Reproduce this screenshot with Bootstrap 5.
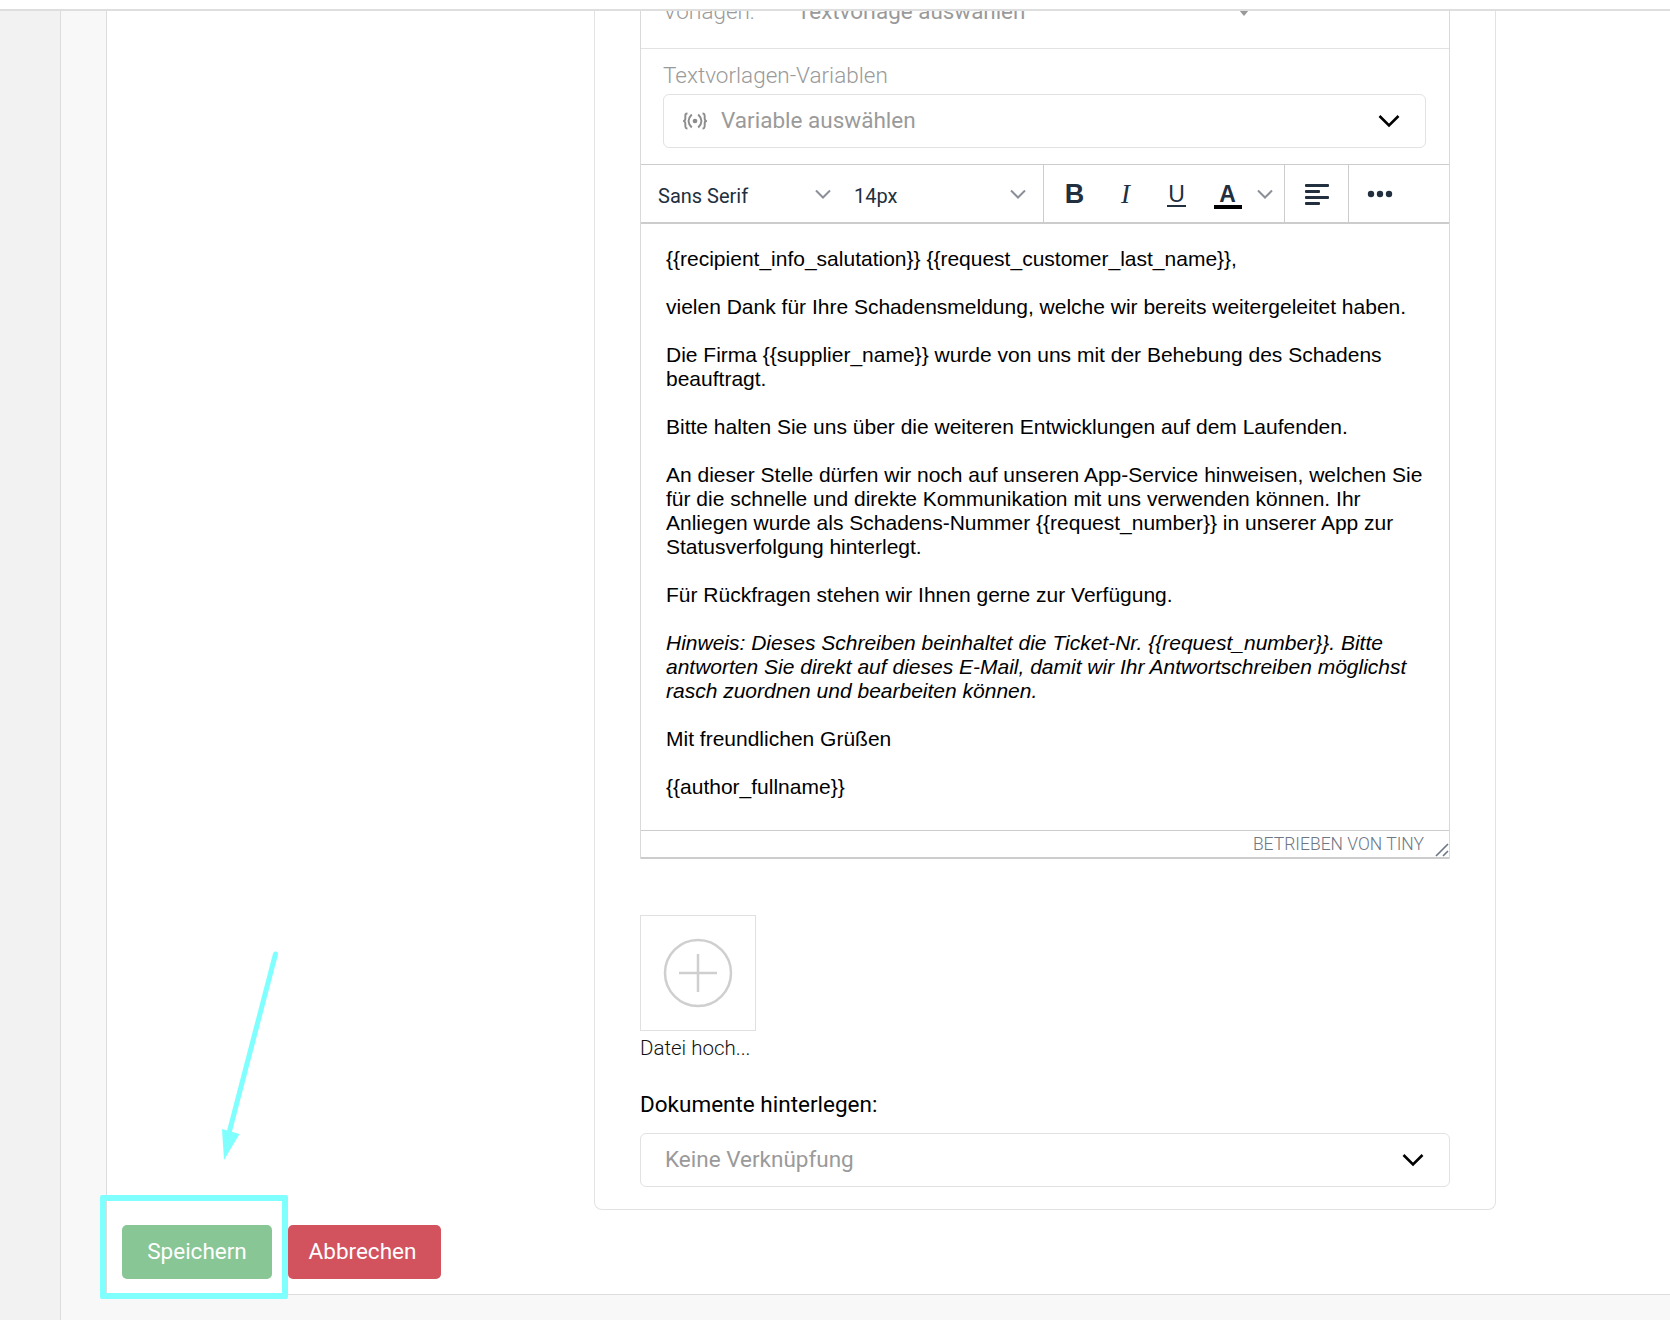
<!DOCTYPE html>
<html lang="de">
<head>
<meta charset="UTF-8">
<meta name="viewport" content="width=device-width, initial-scale=1.0">
<title>Textvorlage</title>
<link href="https://cdn.jsdelivr.net/npm/bootstrap@5.3.3/dist/css/bootstrap.min.css" rel="stylesheet">
<style>
body { height: 1320px; overflow: hidden; background: #fff; font-family: Roboto, sans-serif; font-weight: 300; position: relative; }
.top-strip { height: 11px; border-bottom: 2px solid #dedede; }
.shell { height: 1309px; }
.rail { width: 61px; background: #f2f2f2; border-right: 1px solid #ddd; }
.stage { background: #f8f8f8; padding-left: 45px; }
.sheet { height: 1284px; background: #fff; border-left: 1px solid #ddd; border-bottom: 1px solid #ddd; }
.tpl-card { width: 902px; height: 1199px; margin-left: 487px; padding: 0 45px 0 45px; border: 1px solid #e2e2e2; border-top: 0; border-radius: 0 0 8px 8px; }
.tpl-box { border-left: 1px solid #dadada; border-right: 1px solid #dadada; }
.cut-row { height: 38px; overflow: hidden; border-bottom: 1px solid #e2e2e2; color: #9a9a9a; font-size: 22.4px; line-height: 24px; padding-left: 22px; }
.cut-row span { margin-top: -12px; }
.cut-name { width: 134px; }
.cut-value { width: 441px; font-weight: 400; }
.var-block { height: 115px; padding: 13px 23px 0 22px; }
.var-label { font-size: 22.5px; line-height: 26px; color: #9a9a9a; margin-bottom: 6px; }
.pick { height: 54px; border: 1px solid #e2e2e2; border-radius: 6px; font-size: 22.5px; font-weight: 400; color: #9a9a9a; background: #fff; }
.pick-var { padding: 0 25px 0 17px; }
.pick-doc { padding: 0 25px 0 24px; margin-top: 15px; }
.toolbar { height: 60px; border-top: 1px solid #ccc; border-bottom: 2px solid #ccc; color: #222f3e; }
.tool-fonts { width: 403px; padding-left: 17px; font-size: 20px; font-weight: 400; border-right: 1px solid #ccc; }
.font-cell { width: 196px; padding-right: 23px; }
.size-cell { width: 189px; padding-right: 17px; }
.font-text { padding-top: 5px; }
.tool-format { width: 241px; border-right: 1px solid #ccc; padding-left: 5px; }
.tool-align { width: 64px; border-right: 1px solid #ccc; }
.tool-more { padding-left: 18px; }
.t-glyph { width: 51px; text-align: center; font-size: 27px; line-height: 32px; }
.t-bold { font-family: "Liberation Sans", sans-serif; font-weight: 700; }
.t-italic { font-family: "Liberation Serif", serif; font-style: italic; font-weight: 400; }
.t-under { font-family: "Liberation Sans", sans-serif; font-size: 23px; font-weight: 400; }
.t-under span { display: inline-block; line-height: 21px; border-bottom: 2px solid #222f3e; padding: 0 1px; }
.t-color { font-family: "Liberation Sans", sans-serif; font-size: 23px; font-weight: 700; }
.t-color span { display: inline-block; width: 28px; line-height: 22px; border-bottom: 4px solid #000; }
.editor-body { height: 606px; padding: 23px 23px 0 25px; font-family: "Liberation Sans", sans-serif; font-weight: 400; font-size: 21px; line-height: 24px; color: #000; }
.editor-body p { margin: 0 0 24px; }
.status-line { height: 29px; border-top: 1px solid #ccc; border-bottom: 2px solid #ccc; color: #6d7684; font-size: 17.5px; line-height: 26px; padding-right: 25px; position: relative; }
.grip { position: absolute; right: 0; bottom: 0; }
.add-tile { width: 116px; height: 116px; margin-top: 56px; border: 1px solid #e0e0e0; }
.add-name { font-size: 20.5px; line-height: 24px; margin-top: 5px; color: #111; }
.doc-label { font-size: 22.5px; font-weight: 400; line-height: 28px; margin-top: 30px; color: #000; }
.act-row { padding: 15px 0 0 15px; }
.act-btn { height: 54px; font-size: 22.5px; font-weight: 400; line-height: 1; padding: 0 0 2px; color: #fff; border: 0; border-radius: 5px; }
.act-save { width: 150px; background: #88c695; }
.act-cancel { width: 153px; margin-left: 16px; padding-right: 4px; background: #d2525e; }
.mark-frame { position: absolute; left: 100px; top: 1195px; width: 188px; height: 104px; border: 6px solid #80ffff; border-radius: 2px; }
.mark-arrow { position: absolute; left: 210px; top: 945px; }
</style>
</head>
<body>

<div class="top-strip"></div>

<div class="shell d-flex">
  <div class="rail flex-shrink-0"></div>
  <div class="stage flex-grow-1">
    <div class="sheet">
      <div class="tpl-card">
        <div class="tpl-box">
          <div class="cut-row d-flex">
            <span class="cut-name d-block">Vorlagen:</span>
            <span class="cut-value d-block">Textvorlage auswählen</span>
            <span class="d-block">
              <svg width="12" height="8" viewBox="0 0 12 8"><path d="M1 1h10L6 7z" fill="#999"/></svg>
            </span>
          </div>

          <div class="var-block">
            <div class="var-label">Textvorlagen-Variablen</div>
            <div class="pick pick-var d-flex align-items-center">
              <svg class="me-2" width="28" height="22" viewBox="0 0 26 20" fill="none" stroke="#8c8c8c" stroke-width="1.800">
                <path d="M6 3C4 3 4 4 4 6v2c0 1-1 2-2 2 1 0 2 1 2 2v2c0 2 0 3 2 3"/>
                <path d="M10 4c-2 2-3 4-3 6s1 4 3 6"/>
                <path d="M16 4c2 2 3 4 3 6s-1 4-3 6"/>
                <path d="M20 3c2 0 2 1 2 3v2c0 1 1 2 2 2-1 0-2 1-2 2v2c0 2 0 3-2 3"/>
                <circle cx="13" cy="10" r="2.200" fill="#8c8c8c" stroke="none"/>
              </svg>
              <span class="flex-grow-1 ms-1">Variable auswählen</span>
              <svg width="22" height="14" viewBox="0 0 22 14" fill="none" stroke="#000" stroke-width="2.6"><path d="M1.5 2l9.500 9.500L20.500 2"/></svg>
            </div>
          </div>

          <div class="toolbar d-flex align-items-center">
            <div class="tool-fonts d-flex align-items-center h-100">
              <div class="font-cell d-flex align-items-center justify-content-between">
                <span class="font-text">Sans Serif</span>
                <svg width="16" height="10" viewBox="0 0 16 10" fill="none" stroke="#8b9098" stroke-width="2"><path d="M1 1.500l7 7 7-7"/></svg>
              </div>
              <div class="size-cell d-flex align-items-center justify-content-between">
                <span class="font-text">14px</span>
                <svg width="16" height="10" viewBox="0 0 16 10" fill="none" stroke="#8b9098" stroke-width="2"><path d="M1 1.500l7 7 7-7"/></svg>
              </div>
            </div>
            <div class="tool-format d-flex align-items-center h-100">
              <div class="t-glyph t-bold">B</div>
              <div class="t-glyph t-italic">I</div>
              <div class="t-glyph t-under"><span>U</span></div>
              <div class="t-glyph t-color"><span>A</span></div>
              <svg class="ms-1" width="16" height="10" viewBox="0 0 16 10" fill="none" stroke="#8b9098" stroke-width="2"><path d="M1 1.500l7 7 7-7"/></svg>
            </div>
            <div class="tool-align d-flex align-items-center justify-content-center h-100">
              <svg width="26" height="22" viewBox="0 0 26 22" fill="#222f3e">
                <rect x="1" y="1" width="24" height="3" rx="1"/>
                <rect x="1" y="7" width="15" height="3" rx="1"/>
                <rect x="1" y="13" width="24" height="3" rx="1"/>
                <rect x="1" y="19" width="15" height="3" rx="1"/>
              </svg>
            </div>
            <div class="tool-more d-flex align-items-center h-100">
              <svg width="26" height="8" viewBox="0 0 26 8" fill="#222f3e">
                <circle cx="4" cy="4" r="3.200"/><circle cx="13" cy="4" r="3.200"/><circle cx="22" cy="4" r="3.200"/>
              </svg>
            </div>
          </div>

          <div class="editor-body">
            <p>{{recipient_info_salutation}} {{request_customer_last_name}},</p>
            <p>vielen Dank für Ihre Schadensmeldung, welche wir bereits weitergeleitet haben.</p>
            <p>Die Firma {{supplier_name}} wurde von uns mit der Behebung des Schadens beauftragt.</p>
            <p>Bitte halten Sie uns über die weiteren Entwicklungen auf dem Laufenden.</p>
            <p>An dieser Stelle dürfen wir noch auf unseren App-Service hinweisen, welchen Sie für die schnelle und direkte Kommunikation mit uns verwenden können. Ihr Anliegen wurde als Schadens-Nummer {{request_number}} in unserer App zur Statusverfolgung hinterlegt.</p>
            <p>Für Rückfragen stehen wir Ihnen gerne zur Verfügung.</p>
            <p class="fst-italic">Hinweis: Dieses Schreiben beinhaltet die Ticket-Nr. {{request_number}}. Bitte antworten Sie direkt auf dieses E-Mail, damit wir Ihr Antwortschreiben möglichst rasch zuordnen und bearbeiten können.</p>
            <p>Mit freundlichen Grüßen</p>
            <p>{{author_fullname}}</p>
          </div>

          <div class="status-line text-end">
            BETRIEBEN VON TINY
            <svg class="grip" width="14" height="14" viewBox="0 0 14 14" fill="none" stroke="#6d7684" stroke-width="1.600">
              <path d="M1 13L13 1M8 13l5-5"/>
            </svg>
          </div>
        </div>

        <div class="add-tile d-flex align-items-center justify-content-center">
          <svg width="70" height="70" viewBox="0 0 70 70" fill="none" stroke="#cfcfcf">
            <circle cx="35" cy="35" r="33" stroke-width="2.500"/>
            <path d="M35 16v38M16 35h38" stroke-width="2.500"/>
          </svg>
        </div>
        <div class="add-name">Datei hoch...</div>

        <div class="doc-label">Dokumente hinterlegen:</div>
        <div class="pick pick-doc d-flex align-items-center">
          <span class="flex-grow-1">Keine Verknüpfung</span>
          <svg width="22" height="14" viewBox="0 0 22 14" fill="none" stroke="#000" stroke-width="2.6"><path d="M1.5 2l9.500 9.500L20.500 2"/></svg>
        </div>
      </div>

      <div class="act-row d-flex">
        <button type="button" class="btn act-btn act-save">Speichern</button>
        <button type="button" class="btn act-btn act-cancel">Abbrechen</button>
      </div>
    </div>
  </div>
</div>

<div class="mark-frame"></div>
<svg class="mark-arrow" width="75" height="220" viewBox="0 0 75 220">
  <path d="M65.500 9L19 188" stroke="#80ffff" stroke-width="5" stroke-linecap="round" fill="none"/>
  <path d="M12 184l17.500 5L14 215z" fill="#80ffff"/>
</svg>

<script src="https://cdn.jsdelivr.net/npm/bootstrap@5.3.3/dist/js/bootstrap.bundle.min.js"></script>
</body>
</html>
